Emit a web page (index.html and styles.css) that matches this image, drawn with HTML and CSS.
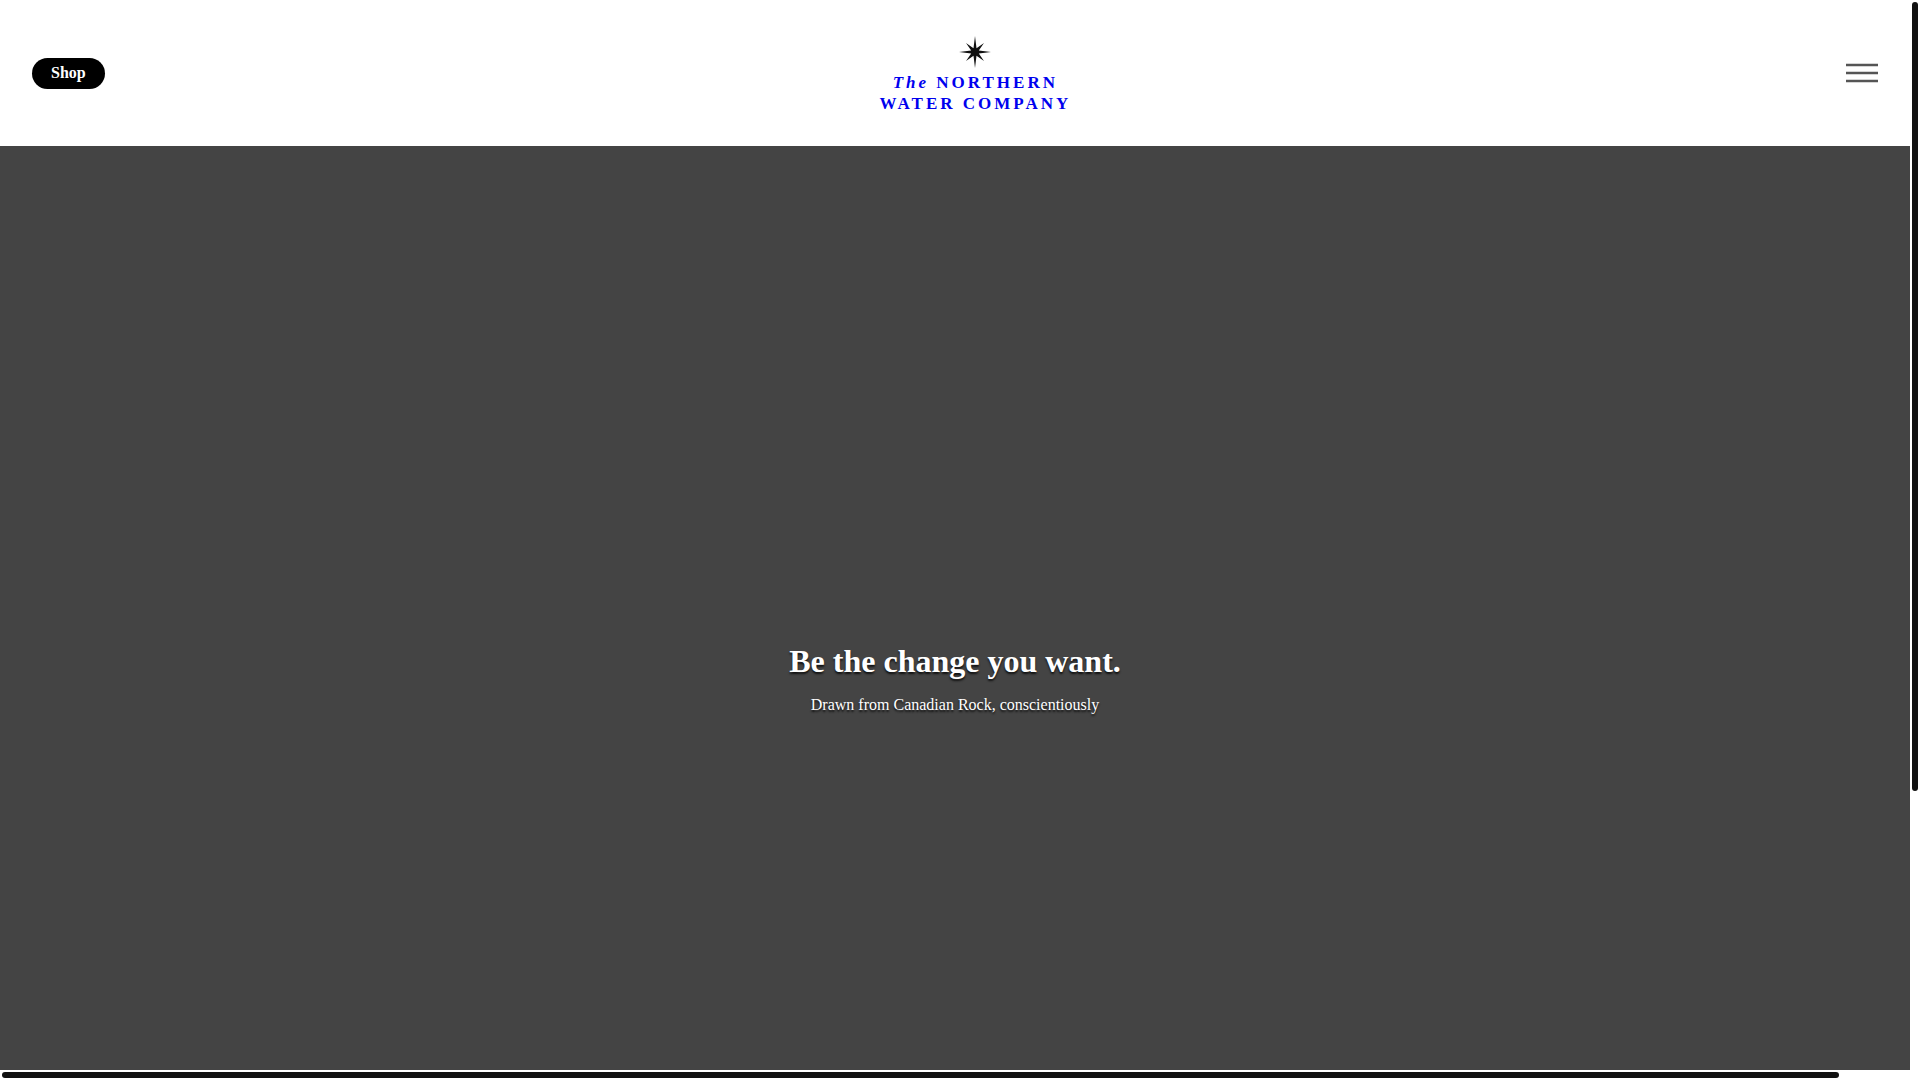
FILE: index.html
```html
<!DOCTYPE html>
<html lang="en">
<head>
    <meta charset="UTF-8">
    <meta name="viewport" content="width=device-width, initial-scale=1.0">
    <title>The Northern Water Company</title>
    <link rel="stylesheet" href="styles.css">
</head>
<body>
    <div class="frame">
        <div class="page">
            <header class="header">
                <button class="shop" type="button">Shop</button>
                <a class="logo" href="#">
                    <svg class="star" viewBox="0 0 32 32" aria-hidden="true">
                        <path d="M16 0 L17.5 12.2 L25 7 L19.8 14.5 L32 16 L19.8 17.5 L25 25 L17.5 19.8 L16 32 L14.5 19.8 L7 25 L12.2 17.5 L0 16 L12.2 14.5 L7 7 L14.5 12.2 Z"/>
                    </svg>
                    <span><em>The</em> NORTHERN</span>
                    <span>WATER COMPANY</span>
                </a>
                <button class="menu" type="button" aria-label="Menu">
                    <svg viewBox="0 0 32 20" aria-hidden="true">
                        <path d="M0 2h32M0 10h32M0 18h32"/>
                    </svg>
                </button>
            </header>
            <main class="hero">
                <h1>Be the change you want.</h1>
                <p>Drawn from Canadian Rock, conscientiously</p>
            </main>
        </div>
        <div class="track vertical"><div class="thumb"></div></div>
        <div class="track horizontal"><div class="thumb"></div></div>
    </div>
</body>
</html>
```

FILE: styles.css
```css
* {
    box-sizing: border-box;
}
body {
    margin: 0;
    font-family: "Liberation Serif", "Times New Roman", serif;
    font-size: 16px;
    background: #fff;
}
.frame {
    display: grid;
    grid-template-columns: minmax(0, 1fr) 10px;
    grid-template-rows: minmax(0, 1fr) 10px;
    height: 100vh;
}
.page {
    overflow: hidden;
}
.header {
    display: flex;
    justify-content: space-between;
    align-items: center;
    padding: 32px;
}
.shop {
    padding: 5px 19px 7px;
    border: none;
    border-radius: 16px;
    background: #000;
    color: #fff;
    font-family: inherit;
    font-size: 16px;
    font-weight: bold;
    line-height: 19px;
    cursor: pointer;
}
.logo {
    display: flex;
    flex-direction: column;
    align-items: center;
    color: #0000ee;
    font-size: 17px;
    font-weight: bold;
    line-height: 21px;
    letter-spacing: 3px;
    text-decoration: none;
}
.star {
    width: 32px;
    height: 32px;
    margin: 4px 0;
    fill: #111;
}
.menu {
    padding: 0;
    border: none;
    background: none;
    cursor: pointer;
}
.menu svg {
    display: block;
    width: 32px;
    height: 20px;
    fill: none;
    stroke: #555;
    stroke-width: 2.5;
}
.hero {
    display: flex;
    flex-direction: column;
    justify-content: center;
    align-items: center;
    height: 100%;
    padding-bottom: 5px;
    background: #444;
    color: #fff;
    text-align: center;
    text-shadow: 0 2px 2px #111;
}
.hero h1 {
    margin: 0;
    font-size: 32px;
    line-height: 36px;
}
.hero p {
    margin: 16px 0 0;
    line-height: 20px;
}

/* scrollbars */
.track {
    padding: 2px;
}
.thumb {
    border-radius: 3px;
    background: #111;
}
.vertical .thumb {
    width: 6px;
    height: 74%;
}
.horizontal .thumb {
    width: 96.4%;
    height: 6px;
}
```
